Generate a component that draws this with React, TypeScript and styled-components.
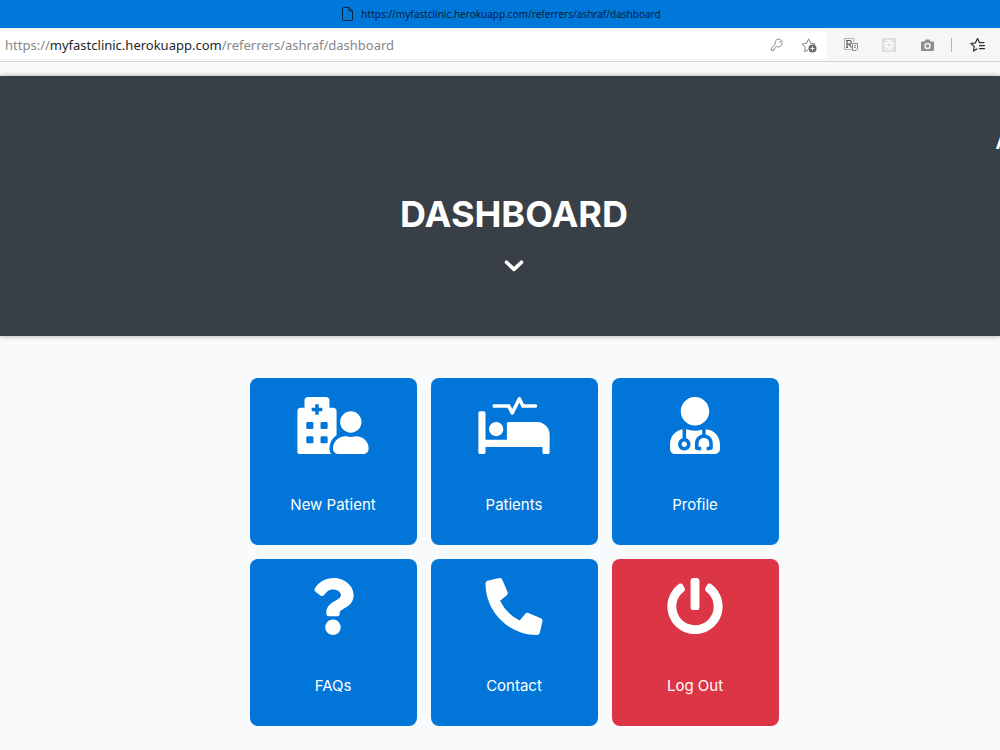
import React from "react";
import styled, { createGlobalStyle } from "styled-components";
import {
  FaHospitalUser,
  FaProcedures,
  FaUserMd,
  FaQuestion,
  FaPhoneAlt,
  FaPowerOff,
} from "react-icons/fa";
import type { IconType } from "react-icons";

const GlobalStyle = createGlobalStyle`
  *, *::before, *::after { box-sizing: border-box; }
  body {
    margin: 0;
    background: #f8fafc;
    font-family: Inter, "Liberation Sans", sans-serif;
  }
`;

const Window = styled.div`
  min-height: 100vh;
  overflow: hidden;
`;

const TitleBar = styled.div`
  display: flex;
  align-items: center;
  justify-content: center;
  gap: 8px;
  height: 28px;
  padding-left: 3px;
  background: #0078d9;
  color: #04203f;
  font: 10px "Noto Sans", "Open Sans", sans-serif;
`;

const Toolbar = styled.div`
  display: flex;
  align-items: center;
  height: 34px;
  padding: 2px 14px 2px 0;
  background: #f6f6f6;
  border-bottom: 1px solid #d3d5d7;
`;

const AddressBar = styled.div`
  display: flex;
  align-items: center;
  flex: 1;
  height: 28px;
  padding: 0 10px 0 5px;
  border-radius: 0 4px 4px 0;
  background: #ffffff;
`;

const Address = styled.div`
  flex: 1;
  color: #85888b;
  font: 13px "Noto Sans", "Open Sans", sans-serif;
  white-space: nowrap;
`;

const Host = styled.span`
  color: #24272a;
`;

const ToolButton = styled.button<{ $gap?: number }>`
  display: flex;
  margin: 0 0 0 ${(p) => p.$gap ?? 0}px;
  padding: 0;
  border: 0;
  background: none;
`;

const Divider = styled.div`
  width: 1px;
  height: 14px;
  margin: 0 18px 0 17px;
  background: #b4b6b8;
`;

const Banner = styled.header`
  height: 260px;
  margin-top: 14px;
  padding: 52px 0 0 28px;
  background: #383f46;
  color: #ffffff;
  box-shadow: 0 0 5px rgba(0, 0, 0, 0.35);
`;

const Account = styled.nav`
  display: flex;
  justify-content: flex-end;
  height: 64px;
  margin-right: -9px;
  font-size: 18px;
  font-weight: 700;
  line-height: 30px;
`;

const Heading = styled.div`
  display: flex;
  flex-direction: column;
  align-items: center;
  gap: 24px;
`;

const Title = styled.h1`
  margin: 0;
  font-size: 36px;
  font-weight: 700;
  line-height: 44px;
`;

const Tiles = styled.main`
  display: grid;
  grid-template-columns: repeat(3, 167px);
  justify-content: center;
  gap: 14px;
  padding: 42px 0 24px 28px;
`;

const Tile = styled.button<{ $danger?: boolean }>`
  display: flex;
  flex-direction: column;
  align-items: center;
  gap: 39px;
  height: 167px;
  margin: 0;
  padding: 19px 0 0;
  border: 0;
  border-radius: 8px;
  background: ${(p) => (p.$danger ? "#dc3545" : "#0275d8")};
  color: #ffffff;
  font: 15px/24px Inter, "Liberation Sans", sans-serif;

  svg {
    flex: none;
    width: 72px;
    height: 57px;
  }
`;

const tiles: { label: string; icon: IconType; danger?: boolean }[] = [
  { label: "New Patient", icon: FaHospitalUser },
  { label: "Patients", icon: FaProcedures },
  { label: "Profile", icon: FaUserMd },
  { label: "FAQs", icon: FaQuestion },
  { label: "Contact", icon: FaPhoneAlt },
  { label: "Log Out", icon: FaPowerOff, danger: true },
];

const PageIcon = () => (
  <svg width="11" height="14" viewBox="0 0 11 14" fill="none" stroke="currentColor" strokeLinejoin="round">
    <path d="M.5 1.5a1 1 0 0 1 1-1H7L10.5 4v8.500a1 1 0 0 1-1 1h-8a1 1 0 0 1-1-1zM7 .5V4h3.500" />
  </svg>
);

const KeyIcon = () => (
  <svg width="14" height="14" viewBox="0 0 14 14" fill="none" stroke="#8a8a8a" strokeLinejoin="round">
    <path d="M8.800 1a4 4 0 0 0-3.600 5.300L1.300 10.200v2.300h2.200v-1.300h1.300V9.900l1.500-1.400A4 4 0 1 0 8.800 1z" />
    <circle cx="9.800" cy="4" r=".8" fill="#8a8a8a" stroke="none" />
  </svg>
);

const AddFavoriteIcon = () => (
  <svg width="16" height="16" viewBox="0 0 16 16" fill="none" stroke="#858585" strokeLinejoin="round">
    <path d="M7 13l-3.300 1.700.7-4.500L1.100 7l4.500-.7L7.600 1.800l2 4.500 4.500.6-1.200 1.200" />
    <circle cx="11.500" cy="11.500" r="4" fill="#6a6a6a" stroke="none" />
    <path d="M11.500 9.500v4M9.500 11.500h4" stroke="#fff" />
  </svg>
);

const ReaderIcon = () => (
  <svg width="15" height="15" viewBox="0 0 15 15" fill="none" stroke="#8c8c8c">
    <path d="M8.500 12.500h-8V1.500h9.500V5" stroke="#b0b0b0" />
    <path d="M3 10.500V3.500h2.500a1.800 1.800 0 0 1 0 3.600H3M5 7.100l2.500 3.400M2 10.500h2M2 3.500h2" stroke="#5f5f5f" strokeWidth="1.200" />
    <path d="M8.500 6.500h5v5.500l-1.500 1.500H8.500zM10 8.500h2M10 10.500h2" />
  </svg>
);

const ReactIcon = () => (
  <svg width="14" height="14" viewBox="0 0 14 14">
    <rect width="14" height="14" fill="#dcdcdc" />
    <g fill="none" stroke="#fff">
      <ellipse cx="7" cy="7" rx="5.500" ry="2.200" />
      <ellipse cx="7" cy="7" rx="5.500" ry="2.200" transform="rotate(60 7 7)" />
      <ellipse cx="7" cy="7" rx="5.500" ry="2.200" transform="rotate(120 7 7)" />
    </g>
  </svg>
);

const CameraIcon = () => (
  <svg width="13" height="12" viewBox="0 0 13 12">
    <path d="M1 2.500h2.500L4.500.5h4l1 2H12a1 1 0 0 1 1 1V11a1 1 0 0 1-1 1H1a1 1 0 0 1-1-1V3.500a1 1 0 0 1 1-1z" fill="#8e8e8e" />
    <circle cx="6.500" cy="7" r="2.500" fill="#8e8e8e" stroke="#f4f4f4" strokeWidth="1.500" />
  </svg>
);

const FavoritesIcon = () => (
  <svg width="16" height="16" viewBox="0 0 16 16" fill="none" stroke="#2b2b2b" strokeWidth="1.200" strokeLinejoin="round" strokeLinecap="round">
    <path d="M7 12l-3.500 2 .8-4.400L1 6.500l4.500-.7L7.500 1.600l2 4H14M9.500 8.600h5M9.500 11.600h5" />
  </svg>
);

const ChevronIcon = () => (
  <svg width="20" height="12" viewBox="0 0 20 12" fill="none" stroke="currentColor" strokeWidth="3.600" strokeLinecap="round" strokeLinejoin="round">
    <path d="M2.500 2.200L10 9.400 17.500 2.200" />
  </svg>
);

export default function App() {
  return (
    <Window>
      <GlobalStyle />
      <TitleBar>
        <PageIcon />
        <span>https://myfastclinic.herokuapp.com/referrers/ashraf/dashboard</span>
      </TitleBar>
      <Toolbar>
        <AddressBar>
          <Address>
            https://<Host>myfastclinic.herokuapp.com</Host>/referrers/ashraf/dashboard
          </Address>
          <ToolButton aria-label="Saved password"><KeyIcon /></ToolButton>
          <ToolButton $gap={17} aria-label="Add to favorites"><AddFavoriteIcon /></ToolButton>
        </AddressBar>
        <ToolButton $gap={17} aria-label="Reader"><ReaderIcon /></ToolButton>
        <ToolButton $gap={23} aria-label="React tools"><ReactIcon /></ToolButton>
        <ToolButton $gap={25} aria-label="Screenshot"><CameraIcon /></ToolButton>
        <Divider />
        <ToolButton aria-label="Favorites"><FavoritesIcon /></ToolButton>
      </Toolbar>
      <Banner>
        <Account>A</Account>
        <Heading>
          <Title>DASHBOARD</Title>
          <ChevronIcon />
        </Heading>
      </Banner>
      <Tiles>
        {tiles.map(({ label, icon: Icon, danger }) => (
          <Tile key={label} type="button" $danger={danger}>
            <Icon aria-hidden />
            <span>{label}</span>
          </Tile>
        ))}
      </Tiles>
    </Window>
  );
}
